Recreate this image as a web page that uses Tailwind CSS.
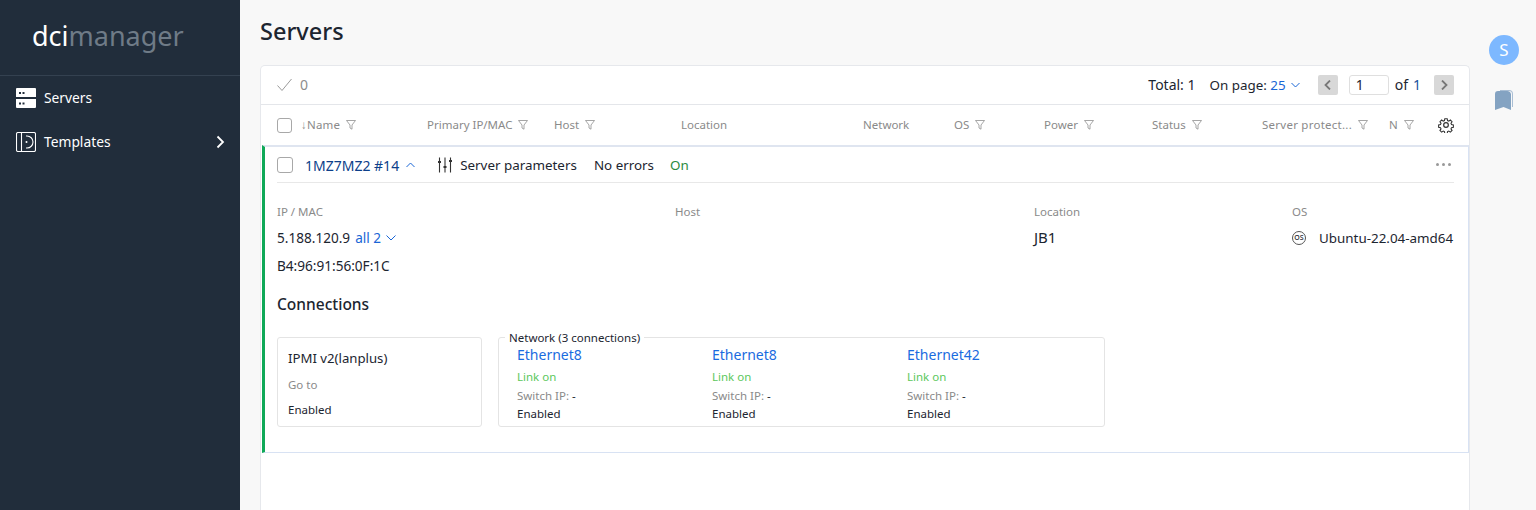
<!DOCTYPE html>
<html lang="en">
<head>
    <meta charset="UTF-8">
    <title>Servers</title>
    <script src="https://cdn.jsdelivr.net/npm/@tailwindcss/browser@4"></script>
</head>
<body class="h-[510px] overflow-hidden flex bg-[#f8f8f8] text-[#1c2530] text-[13.4px] font-['Noto_Sans',sans-serif]">
    <!-- sidebar -->
    <aside class="w-[240px] shrink-0 bg-[#212d3b] text-white text-[13.8px]">
        <div class="h-[76px] border-b border-[#344150] pl-[32px] pt-[15px] text-[27px] leading-[42px]">
            <span class="text-white">dci</span><span class="text-[#6f7b87]">manager</span>
        </div>
        <nav>
            <div class="h-[44px] flex items-center pl-[16px] gap-[8px]">
                <svg class="w-[20px] h-[20px]" viewBox="0 0 20 20" fill="#fff">
                    <path fill-rule="evenodd" d="M1 0h18a1 1 0 0 1 1 1v8H0V1a1 1 0 0 1 1-1zM3 4h2v2H3zM6.500 4h2v2h-2zM0 11h20v8a1 1 0 0 1-1 1H1a1 1 0 0 1-1-1zM3 14.500h2v2H3zM6.500 14.500h2v2h-2z"/>
                </svg>
                <span>Servers</span>
            </div>
            <div class="h-[44px] flex items-center pl-[16px] pr-[15px] gap-[8px]">
                <svg class="w-[20px] h-[20px]" viewBox="0 0 20 20" fill="none" stroke="#fff" stroke-width="1.100">
                    <rect x="0.500" y="0.500" width="19" height="19" rx="1.500"/>
                    <path d="M5.500 0.500v19M10 4h1a6 6 0 0 1 0 12h-1"/>
                    <circle cx="10.500" cy="10" r="1" fill="#fff" stroke="none"/>
                </svg>
                <span>Templates</span>
                <svg class="ml-auto w-[10px] h-[14px]" viewBox="0 0 10 14" fill="none" stroke="#fff" stroke-width="1.800"><path d="M2.500 1.500 8 7l-5.500 5.500"/></svg>
            </div>
        </nav>
    </aside>

    <!-- main -->
    <main class="w-[1230px] shrink-0 pl-[20px]">
        <h1 class="h-[65px] pt-[12px] text-[23.500px] leading-[38px] font-medium">Servers</h1>
        <div class="bg-white border border-b-0 border-[#e6e8ec] rounded-t-[5px] h-[445px]">
            <!-- toolbar -->
            <div class="h-[39px] flex items-center pl-[16px] pr-[15px] border-b border-[#e4e6ea]">
                <svg class="w-[15px] h-[14px]" viewBox="0 0 15 14" fill="none" stroke="#9a9a9a" stroke-width="1"><path d="M0.500 7.500 5 12.500 14.500 1"/></svg>
                <span class="ml-[8px] pb-[1px] text-[14px] text-[#8d8d8d]">0</span>
                <span class="ml-auto pb-[1px] text-[14px]">Total: 1</span>
                <span class="ml-[14px]">On page: <span class="text-[#1a66d6]">25</span></span>
                <svg class="ml-[5px] w-[9px] h-[6px]" viewBox="0 0 9 6" fill="none" stroke="#1a66d6"><path d="M0.500 1 4.500 5l4-4"/></svg>
                <div class="ml-[18px] w-[20px] h-[20px] rounded-[2px] bg-[#d8d8d8] flex items-center justify-center">
                    <svg class="w-[7px] h-[10px]" viewBox="0 0 7 10" fill="none" stroke="#777" stroke-width="1.800"><path d="M6 0.500 1.500 5 6 9.500"/></svg>
                </div>
                <div class="ml-[11px] w-[40px] h-[20px] border border-[#dfdfdf] rounded-[3px] pl-[6px] text-[14px] leading-[18px]">1</div>
                <span class="ml-[6px] pb-[1px] text-[14px]">of</span>
                <span class="ml-[5px] pb-[1px] text-[14px] text-[#1a4f9c]">1</span>
                <div class="ml-[13px] w-[20px] h-[20px] rounded-[2px] bg-[#d8d8d8] flex items-center justify-center">
                    <svg class="w-[7px] h-[10px]" viewBox="0 0 7 10" fill="none" stroke="#777" stroke-width="1.800"><path d="M1 0.500 5.500 5 1 9.500"/></svg>
                </div>
            </div>

            <!-- table header -->
            <div class="h-[40px] flex items-center pl-[16px] text-[11.500px] text-[#8a8a8a]">
                <div class="w-[24px] shrink-0"><div class="w-[15px] h-[15px] border border-[#a8a8a8] rounded-[3px]"></div></div>
                <div class="w-[126px] flex items-center gap-[6px]"><span class="tracking-[0.2px]">↓Name</span><svg class="w-[10px] h-[10px]" viewBox="0 0 10 10" fill="none" stroke="#8f8f8f" stroke-width="0.800"><path d="M0.500 0.500h9L6 5v4.200L4 8V5z"/></svg></div>
                <div class="w-[127px] flex items-center gap-[6px]"><span>Primary IP/MAC</span><svg class="w-[10px] h-[10px]" viewBox="0 0 10 10" fill="none" stroke="#8f8f8f" stroke-width="0.800"><path d="M0.500 0.500h9L6 5v4.200L4 8V5z"/></svg></div>
                <div class="w-[127px] flex items-center gap-[6px]"><span>Host</span><svg class="w-[10px] h-[10px]" viewBox="0 0 10 10" fill="none" stroke="#8f8f8f" stroke-width="0.800"><path d="M0.500 0.500h9L6 5v4.200L4 8V5z"/></svg></div>
                <div class="w-[182px]">Location</div>
                <div class="w-[91px]">Network</div>
                <div class="w-[90px] flex items-center gap-[6px]"><span>OS</span><svg class="w-[10px] h-[10px]" viewBox="0 0 10 10" fill="none" stroke="#8f8f8f" stroke-width="0.800"><path d="M0.500 0.500h9L6 5v4.200L4 8V5z"/></svg></div>
                <div class="w-[108px] flex items-center gap-[6px]"><span>Power</span><svg class="w-[10px] h-[10px]" viewBox="0 0 10 10" fill="none" stroke="#8f8f8f" stroke-width="0.800"><path d="M0.500 0.500h9L6 5v4.200L4 8V5z"/></svg></div>
                <div class="w-[110px] flex items-center gap-[6px]"><span>Status</span><svg class="w-[10px] h-[10px]" viewBox="0 0 10 10" fill="none" stroke="#8f8f8f" stroke-width="0.800"><path d="M0.500 0.500h9L6 5v4.200L4 8V5z"/></svg></div>
                <div class="w-[127px] flex items-center gap-[6px]"><span class="tracking-[0.25px]">Server protect...</span><svg class="w-[10px] h-[10px]" viewBox="0 0 10 10" fill="none" stroke="#8f8f8f" stroke-width="0.800"><path d="M0.500 0.500h9L6 5v4.200L4 8V5z"/></svg></div>
                <div class="w-[49px] flex items-center gap-[6px]"><span>N</span><svg class="w-[10px] h-[10px]" viewBox="0 0 10 10" fill="none" stroke="#8f8f8f" stroke-width="0.800"><path d="M0.500 0.500h9L6 5v4.200L4 8V5z"/></svg></div>
                <svg class="w-[16px] h-[16px]" viewBox="0 0 24 24" fill="none" stroke="#333" stroke-width="1.800">
                    <circle cx="12" cy="12" r="3.500"/>
                    <path d="M10 1.500h4l.6 3.100 2 .9 2.700-1.800 2.800 2.800-1.800 2.700.9 2 3.100.6v4l-3.100.6-.9 2 1.800 2.700-2.800 2.800-2.700-1.800-2 .9-.6 3.100h-4l-.6-3.100-2-.9-2.700 1.800-2.800-2.800 1.800-2.700-.9-2-3.100-.6v-4l3.100-.6.9-2-1.800-2.700 2.800-2.800 2.700 1.800 2-.9z" transform="translate(1.200 1.200) scale(.9)"/>
                </svg>
            </div>

            <!-- server row -->
            <div class="h-[308px] ml-[1px] border-t-2 border-r border-b border-t-[#dfe5f0] border-r-[#d8e2f3] border-b-[#d8e2f3] border-l-[3px] border-l-[#0fa958] pl-[12px] pr-[14px]">
                <div class="h-[36px] flex items-center border-b border-[#e8e8e8]">
                    <div class="w-[16px] h-[16px] border border-[#a8a8a8] rounded-[3px]"></div>
                    <span class="ml-[12px] pt-[1px] text-[14px] text-[#0d3f8a]">1MZ7MZ2 #14</span>
                    <svg class="ml-[7px] w-[9px] h-[6px]" viewBox="0 0 9 6" fill="none" stroke="#1a66d6"><path d="M0.500 5 4.500 1l4 4"/></svg>
                    <svg class="ml-[22px] w-[16px] h-[16px]" viewBox="0 0 16 16" fill="none" stroke="#333" stroke-width="1.100">
                        <path d="M2.500 0.500v15M8 0.500v15M13.500 0.500v15"/>
                        <path d="M1 5h3M6.500 10h3M12 4h3" stroke-width="2.200"/>
                    </svg>
                    <span class="ml-[7px] pt-[1px]">Server parameters</span>
                    <span class="ml-[17px] pt-[1px]">No errors</span>
                    <span class="ml-[16px] pt-[1px] text-[#2a8a3e]">On</span>
                    <span class="ml-auto mr-[3px] flex gap-[3px]">
                        <i class="w-[3px] h-[3px] rounded-full bg-[#999]"></i>
                        <i class="w-[3px] h-[3px] rounded-full bg-[#999]"></i>
                        <i class="w-[3px] h-[3px] rounded-full bg-[#999]"></i>
                    </span>
                </div>

                <div class="flex pt-[20px]">
                    <div class="w-[398px] shrink-0 text-[13.600px]">
                        <div class="text-[11.500px] text-[#8a8a8a] leading-[18px]">IP / MAC</div>
                        <div class="mt-[7px] leading-[20px] flex items-center">5.188.120.9<span class="ml-[5px] text-[#1a66d6]">all 2</span>
                            <svg class="ml-[5px] w-[10px] h-[6px]" viewBox="0 0 10 6" fill="none" stroke="#1a66d6"><path d="M0.500 0.500 5 5l4.500-4.500"/></svg>
                        </div>
                        <div class="mt-[8px] leading-[20px]">B4:96:91:56:0F:1C</div>
                    </div>
                    <div class="w-[359px] shrink-0">
                        <div class="text-[11.500px] text-[#8a8a8a] leading-[18px]">Host</div>
                    </div>
                    <div class="w-[258px] shrink-0">
                        <div class="text-[11.500px] text-[#8a8a8a] leading-[18px]">Location</div>
                        <div class="mt-[6px] text-[15px] leading-[20px]">JB1</div>
                    </div>
                    <div>
                        <div class="text-[11.500px] text-[#8a8a8a] leading-[18px]">OS</div>
                        <div class="mt-[7px] leading-[20px] flex items-center whitespace-nowrap">
                            <span class="w-[14px] h-[14px] rounded-full border border-[#555] text-[7px] leading-[12px] text-center font-medium">OS</span>
                            <span class="ml-[13px]">Ubuntu-22.04-amd64</span>
                        </div>
                    </div>
                </div>

                <h2 class="mt-[17px] text-[15.500px] leading-[22px] font-medium">Connections</h2>

                <div class="mt-[22px] flex gap-[16px]">
                    <div class="w-[205px] h-[90px] border border-[#e4e4e4] rounded-[3px] pl-[10px] pt-[10px]">
                        <div class="leading-[20px] text-[13.200px]">IPMI v2(lanplus)</div>
                        <div class="mt-[8px] text-[11.500px] leading-[18px] text-[#8a8a8a]">Go to</div>
                        <div class="mt-[7px] text-[11.500px] leading-[18px]">Enabled</div>
                    </div>
                    <div class="relative w-[607px] h-[90px] border border-[#e4e4e4] rounded-[3px] pl-[18px] flex">
                        <span class="absolute left-[6px] top-[-7px] bg-white px-[4px] text-[11.500px] leading-[14px]">Network (3 connections)</span>
                        <div class="w-[195px] pt-[7px]">
                            <div class="text-[#1a6be0] text-[14px] leading-[20px]">Ethernet8</div>
                            <div class="mt-[3px] text-[11.500px] leading-[18px] text-[#5cc85c]">Link on</div>
                            <div class="mt-[1px] text-[11.500px] leading-[18px] text-[#8a8a8a]">Switch IP: <span class="text-[#1c2530]">-</span></div>
                            <div class="text-[11.500px] leading-[18px]">Enabled</div>
                        </div>
                        <div class="w-[195px] pt-[7px]">
                            <div class="text-[#1a6be0] text-[14px] leading-[20px]">Ethernet8</div>
                            <div class="mt-[3px] text-[11.500px] leading-[18px] text-[#5cc85c]">Link on</div>
                            <div class="mt-[1px] text-[11.500px] leading-[18px] text-[#8a8a8a]">Switch IP: <span class="text-[#1c2530]">-</span></div>
                            <div class="text-[11.500px] leading-[18px]">Enabled</div>
                        </div>
                        <div class="w-[195px] pt-[7px]">
                            <div class="text-[#1a6be0] text-[14px] leading-[20px]">Ethernet42</div>
                            <div class="mt-[3px] text-[11.500px] leading-[18px] text-[#5cc85c]">Link on</div>
                            <div class="mt-[1px] text-[11.500px] leading-[18px] text-[#8a8a8a]">Switch IP: <span class="text-[#1c2530]">-</span></div>
                            <div class="text-[11.500px] leading-[18px]">Enabled</div>
                        </div>
                    </div>
                </div>
            </div>
        </div>
    </main>

    <!-- right rail -->
    <div class="flex-1 flex flex-col items-center pt-[35px] pl-[2px]">
        <div class="w-[30px] h-[30px] rounded-full bg-[#7db8ff] text-white text-[17px] flex items-center justify-center">S</div>
        <svg class="mt-[25px] w-[18px] h-[20px]" viewBox="0 0 18 20" fill="#84a3c2">
            <path d="M5 0h9a4 4 0 0 1 4 4v13h-1V4a3 3 0 0 0-3-3H5z" fill="#a9bed4"/>
            <path d="M3 1h9a4 4 0 0 1 4 3v16l-7.500-3L0 20V4a3 3 0 0 1 3-3z"/>
        </svg>
    </div>
</body>
</html>
